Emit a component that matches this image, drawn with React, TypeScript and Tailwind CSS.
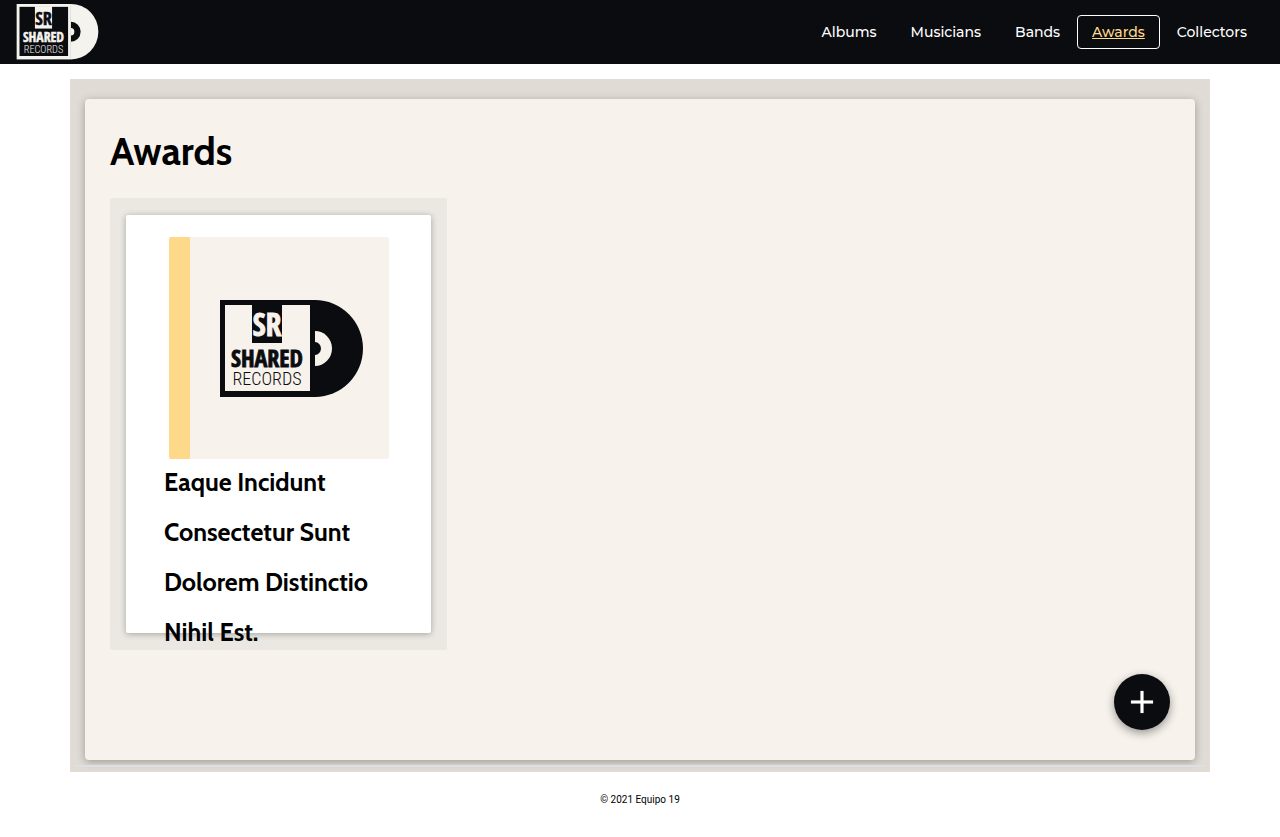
import React from "react";
import { Plus } from "lucide-react";

type LogoProps = { className: string; ink: string; paper: string };

function Logo({ className, ink, paper }: LogoProps) {
  return (
    <svg viewBox="0 0 143 98" className={className} role="img" aria-label="Shared Records">
      <path d="M95 0A48 48.5 0 0 1 95 97Z" fill={ink} />
      <path d="M95 31A17 17.5 0 0 1 95 66Z" fill={paper} />
      <path d="M95 42A6 6.5 0 0 1 95 55Z" fill={ink} />
      <rect width="95" height="97" fill={ink} />
      <rect x="5" y="5" width="85" height="86" fill={paper} />
      <rect x="32" y="4" width="30" height="39" fill={ink} />
      <g textAnchor="middle" className="font-['Open_Sans_Condensed','Roboto_Condensed','Liberation_Sans_Narrow',sans-serif]">
        <text x="47" y="36" fontSize="32" fontWeight="700" fill={paper} stroke={paper} strokeWidth="0.8">SR</text>
        <text x="47" y="67" fontSize="24" fontWeight="700" fill={ink} stroke={ink} strokeWidth="0.8">SHARED</text>
      </g>
      <text
        x="47"
        y="85"
        fontSize="18"
        fontWeight="300"
        fill={ink}
        textAnchor="middle"
        className="font-['Roboto_Condensed','Liberation_Sans_Narrow',sans-serif]"
      >
        RECORDS
      </text>
    </svg>
  );
}

const links = ["Albums", "Musicians", "Bands", "Awards", "Collectors"];

export default function App() {
  return (
    <div className="bg-white font-[Roboto,sans-serif] text-black">
      <header className="flex h-16 items-center justify-between bg-[#0b0c10] px-4">
        <a href="#home">
          <Logo className="h-14 w-[83px]" ink="#f5f3ee" paper="#0b0c10" />
        </a>
        <nav className="flex font-[Montserrat,Inter,sans-serif] text-sm font-medium">
          {links.map((name) => (
            <a
              key={name}
              href={"#" + name.toLowerCase()}
              className={
                name === "Awards"
                  ? "rounded border border-white px-3.5 py-1 leading-6 text-[#ffd98a] underline"
                  : "rounded border border-transparent px-4 py-1 leading-6 text-white"
              }
            >
              {name}
            </a>
          ))}
        </nav>
      </header>
      <main className="mx-auto mt-[15px] max-w-[1140px] bg-[#e0dbd5] px-[15px] pt-5 pb-[5px]">
        <section className="flex flex-col rounded bg-[#f7f2ec] px-[25px] pt-[27px] pb-[30px] shadow-[0_2px_8px_rgba(0,0,0,0.3)]">
          <h1 className="font-[Cabin,Lato,sans-serif] text-[39px] leading-[50px] font-bold">Awards</h1>
          <div className="mt-[22px] h-[452px] w-[337px] max-w-full rounded-xs bg-[#ebe8e3] px-4 pt-[17px]">
            <article className="h-[418px] rounded-xs bg-white px-[38px] pt-[22px] shadow-[0_1px_6px_rgba(0,0,0,0.3)]">
              <div className="mx-auto flex h-[222px] w-[220px] overflow-hidden rounded-xs bg-[#f7f2ec]">
                <div className="w-[21px] bg-[#ffd98a]" />
                <div className="flex flex-1 items-center justify-center pt-0.5 pl-[5px]">
                  <Logo className="h-[98px] w-[143px]" ink="#0b0c10" paper="#f7f2ec" />
                </div>
              </div>
              <h2 className="-mt-0.5 font-[Cabin,Lato,sans-serif] text-[25px] leading-[50px] font-bold [font-variant-ligatures:none]">
                Eaque Incidunt Consectetur Sunt Dolorem Distinctio Nihil Est.
              </h2>
            </article>
          </div>
          <button
            aria-label="Add award"
            className="mt-6 flex size-14 items-center justify-center self-end rounded-full bg-[#0b0c10] text-white shadow-[0_3px_10px_rgba(0,0,0,0.4)]"
          >
            <Plus size={38} strokeWidth={2} strokeLinecap="butt" />
          </button>
        </section>
        <div className="-mx-2.5 mt-[5px] h-0.5 bg-[#dcdfe4]" />
      </main>
      <footer className="py-5 text-center text-[10px] leading-4">© 2021 Equipo 19</footer>
    </div>
  );
}
